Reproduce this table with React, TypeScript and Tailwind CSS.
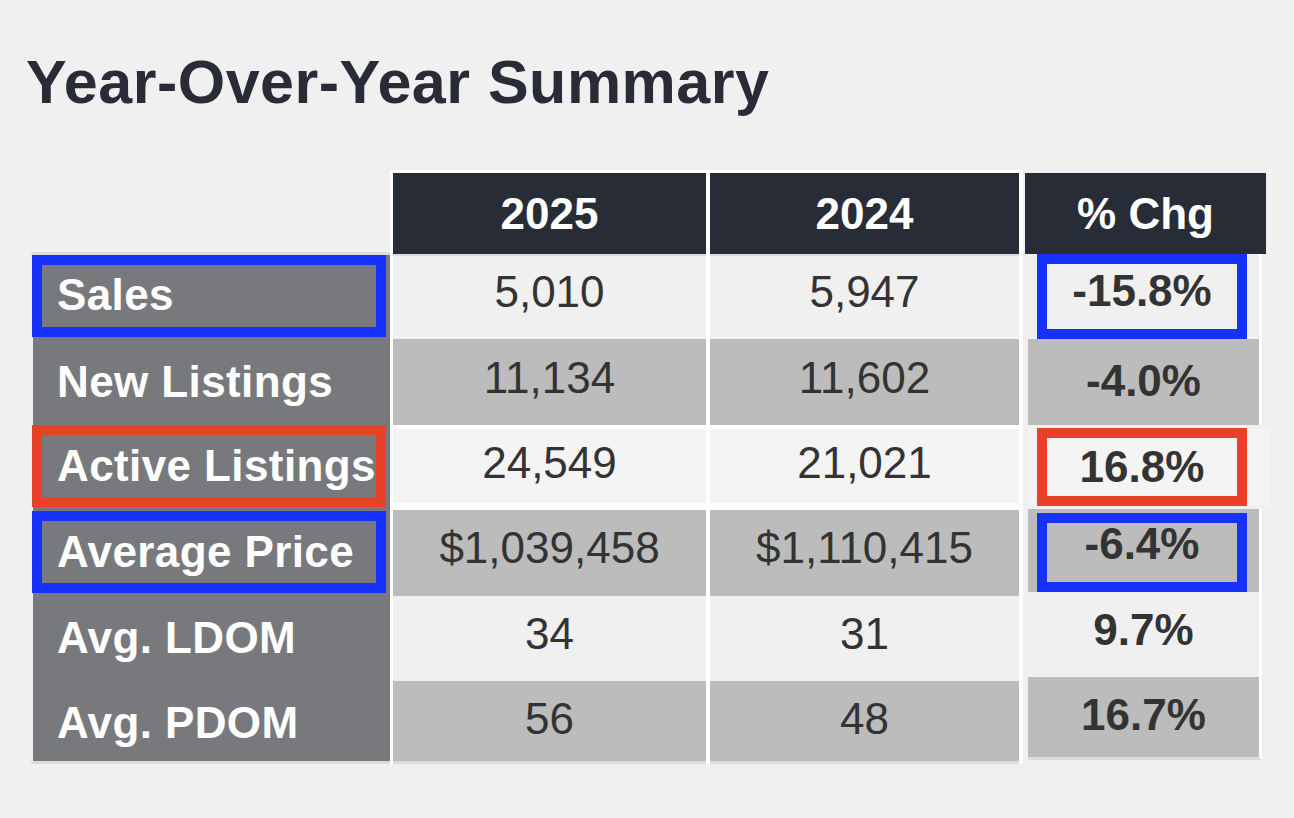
// Year-over-year market summary slide: title plus a 3-column comparison table
// with highlight boxes drawn around a few labels and changes.

const LABEL_ROWS = [
  { label: "Sales", rowCls: "h-[84px]", box: "h-[82px] border-[#1631fb]", textCls: "pb-[2px]" },
  { label: "New Listings", rowCls: "h-[86px]", box: null, textCls: "" },
  { label: "Active Listings", rowCls: "h-[84px]", box: "h-[82px] border-[#e84128]", textCls: "" },
  { label: "Average Price", rowCls: "h-[86px] pt-[2px]", box: "h-[82px] border-[#1631fb]", textCls: "" },
  { label: "Avg. LDOM", rowCls: "h-[85px]", box: null, textCls: "" },
  { label: "Avg. PDOM", rowCls: "h-[81px]", box: null, textCls: "pt-[4px]" },
];

const DATA_ROWS = [
  { a: "5,010", b: "5,947", cls: "h-[85px] border-t-[2px] border-[#dcdcdc] bg-[#f0f0f0] pb-[12px]" },
  { a: "11,134", b: "11,602", cls: "h-[86px] bg-[#bbbcbb] pb-[8px]" },
  { a: "24,549", b: "21,021", cls: "mt-[4px] h-[74px] bg-[#f4f4f4] pb-[6px]" },
  { a: "$1,039,458", b: "$1,110,415", cls: "mt-[7px] h-[86px] bg-[#bbbcbb] pb-[10px]" },
  { a: "34", b: "31", cls: "h-[85px] bg-[#f0f0f0] pb-[10px]" },
  { a: "56", b: "48", cls: "h-[83px] border-b-[3px] border-[#dcdcdc] bg-[#bbbcbb] pb-[5px]" },
];

const CHG_ROWS = [
  { v: "-15.8%", rowCls: "h-[85px] w-[234px] border-r-[3px] border-white bg-[#f0f0f0]", box: "h-[85px] border-[#1631fb] pb-[11px]", textCls: "" },
  { v: "-4.0%", rowCls: "h-[86px] w-[234px] border-r-[3px] border-white bg-[#bbbcbb]", box: null, textCls: "pb-[2px]" },
  { v: "16.8%", rowCls: "mt-[3px] h-[78px] w-[242px] bg-[#f4f4f4]", box: "h-[78px] border-[#e84128] pb-[1px]", textCls: "" },
  { v: "-6.4%", rowCls: "mt-[3px] h-[83px] w-[234px] border-r-[3px] border-white bg-[#bbbcbb] pt-[4px]", box: "h-[79px] border-[#1631fb] pb-[17px]", textCls: "" },
  { v: "9.7%", rowCls: "h-[85px] w-[234px] border-r-[3px] border-white bg-[#f0f0f0]", box: null, textCls: "pb-[10px]" },
  { v: "16.7%", rowCls: "h-[83px] w-[234px] border-r-[3px] border-b-[3px] border-r-white border-b-[#dcdcdc] bg-[#bbbcbb]", box: null, textCls: "pb-[4px]" },
];

export default function App() {
  return (
    <div className="h-[818px] w-[1294px] overflow-hidden bg-[#f0f0f0] font-['Liberation_Sans',Arial,sans-serif]">
      <h1 className="pl-[26px] pt-[52px] text-[61px] font-bold leading-none tracking-[0.5px] text-[#292c36]">
        Year-Over-Year Summary
      </h1>

      <div className="ml-[31px] mt-[57px] flex items-start">
        {/* label column */}
        <div className="w-[359px] pt-[82px]">
          <div className="border-y-[3px] border-[#dcdcdc]">
            {LABEL_ROWS.map((r) => (
              <div key={r.label} className={`ml-[2px] bg-[#78797d] ${r.rowCls}`}>
                {r.box ? (
                  <div className={`-ml-px flex w-[354px] items-center border-[10px] pl-[15px] ${r.box}`}>
                    <span className={`text-[44px] font-bold leading-none tracking-[0.4px] text-white ${r.textCls}`}>{r.label}</span>
                  </div>
                ) : (
                  <div className={`flex h-full items-center pl-[24px] ${r.textCls}`}>
                    <span className="text-[44px] font-bold leading-none tracking-[0.4px] text-white">{r.label}</span>
                  </div>
                )}
              </div>
            ))}
          </div>
        </div>

        {/* 2025 / 2024 columns */}
        <div className="bg-white pl-[3px] pr-[4px] pt-[3px]">
          <div className="grid grid-cols-[313px_309px] gap-x-[4px]">
            <div className="flex h-[81px] items-center justify-center bg-[#282c37] text-[44px] font-bold leading-none text-white">
              2025
            </div>
            <div className="flex h-[81px] items-center justify-center bg-[#282c37] text-[44px] font-bold leading-none text-white">
              2024
            </div>
            {DATA_ROWS.map((r) => (
              <div key={r.a} className="contents">
                <div className={`flex items-center justify-center text-[44px] leading-none text-[#333333] ${r.cls}`}>{r.a}</div>
                <div className={`flex items-center justify-center text-[44px] leading-none text-[#333333] ${r.cls}`}>{r.b}</div>
              </div>
            ))}
          </div>
        </div>

        {/* % change column */}
        <div className="ml-[2px] pt-[3px]">
          <div className="flex h-[81px] w-[241px] items-center justify-center bg-[#282c37] text-[44px] font-bold leading-none text-white">
            % Chg
          </div>
          <div className="ml-[3px]">
            {CHG_ROWS.map((r) => (
              <div key={r.v} className={r.rowCls}>
                {r.box ? (
                  <div className={`ml-[9px] flex w-[210px] items-center justify-center border-[10px] ${r.box}`}>
                    <span className="text-[44px] font-bold leading-none text-[#333333]">{r.v}</span>
                  </div>
                ) : (
                  <div className={`flex h-full w-[231px] items-center justify-center ${r.textCls}`}>
                    <span className="text-[44px] font-bold leading-none text-[#333333]">{r.v}</span>
                  </div>
                )}
              </div>
            ))}
          </div>
        </div>
      </div>
    </div>
  );
}
